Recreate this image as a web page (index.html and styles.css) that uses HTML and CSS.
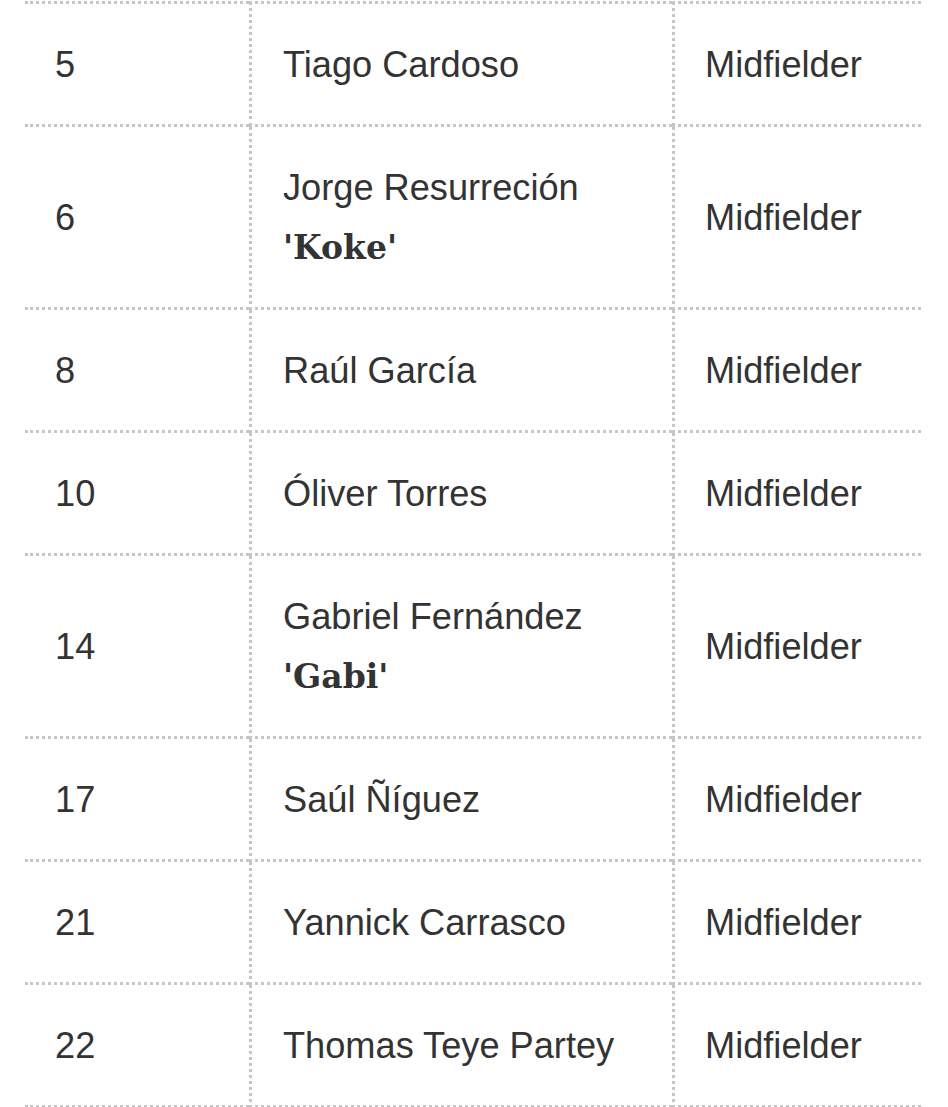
FILE: index.html
```html
<!DOCTYPE html>
<html>
<head>
<meta charset="utf-8">
<link rel="stylesheet" href="styles.css">
</head>
<body>
<div class="wrap">
<table class="squad">
<tbody>
<tr><td class="num">5</td><td class="name">Tiago Cardoso</td><td class="pos">Midfielder</td></tr>
<tr><td class="num">6</td><td class="name">Jorge Resurreción<b class="nick">'Koke'</b></td><td class="pos">Midfielder</td></tr>
<tr><td class="num">8</td><td class="name">Raúl García</td><td class="pos">Midfielder</td></tr>
<tr><td class="num">10</td><td class="name">Óliver Torres</td><td class="pos">Midfielder</td></tr>
<tr><td class="num">14</td><td class="name">Gabriel Fernández<b class="nick">'Gabi'</b></td><td class="pos">Midfielder</td></tr>
<tr><td class="num">17</td><td class="name">Saúl Ñíguez</td><td class="pos">Midfielder</td></tr>
<tr><td class="num">21</td><td class="name">Yannick Carrasco</td><td class="pos">Midfielder</td></tr>
<tr><td class="num">22</td><td class="name">Thomas Teye Partey</td><td class="pos">Midfielder</td></tr>
</tbody>
</table>
</div>
</body>
</html>
```

FILE: styles.css
```css
html, body {
  margin: 0;
  padding: 0;
  background: #fff;
}
.wrap {
  padding: 1px 27px 0 25px;
}
.squad {
  width: 896px;
  border-collapse: separate;
  border-spacing: 0;
  table-layout: fixed;
  font-family: "Liberation Sans", Arial, sans-serif;
  font-size: 36.2px;
  line-height: 60px;
  color: #333;
}
.squad td {
  box-sizing: border-box;
  padding: 31px 30px 29px 31px;
  vertical-align: middle;
  border-bottom: 3px dotted #c6c6c6;
  white-space: nowrap;
}
.squad tr:first-child td {
  border-top: 3px dotted #c6c6c6;
}
.squad td.num {
  width: 224px;
  padding-left: 30px;
}
.squad td.name {
  width: 423px;
  border-left: 3px dotted #c6c6c6;
}
.squad td.pos {
  width: 249px;
  padding-left: 30px;
  border-left: 3px dotted #c6c6c6;
}
.nick {
  display: block;
  font-family: "DejaVu Serif", serif;
  font-weight: bold;
  font-size: 33px;
  line-height: 60px;
}
```
